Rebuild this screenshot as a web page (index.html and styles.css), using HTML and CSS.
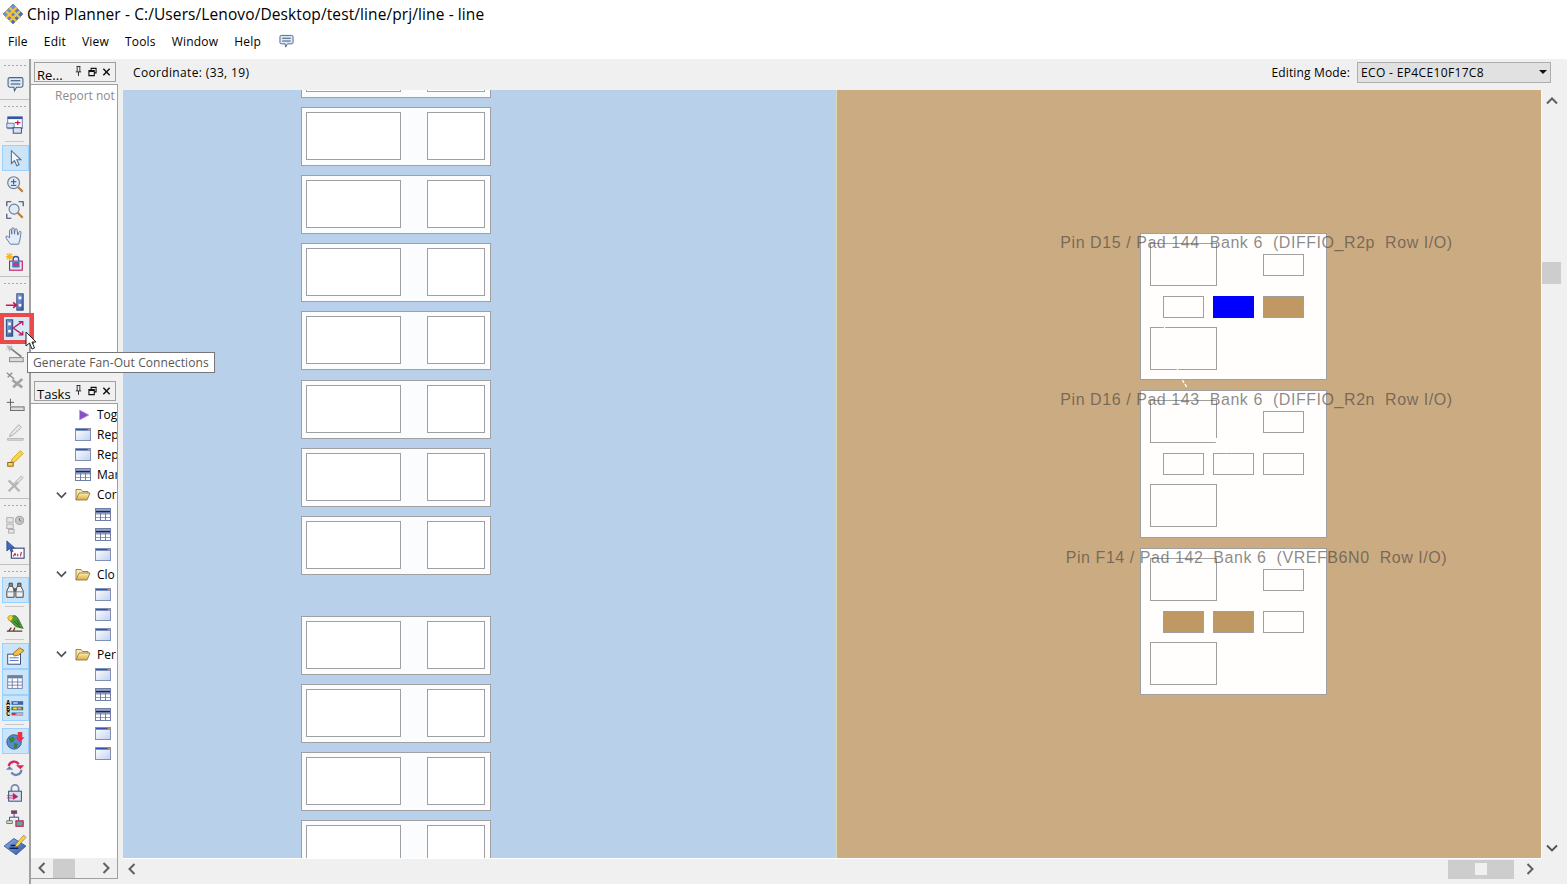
FILE: index.html
```html
<!DOCTYPE html>
<html lang="en">
<head>
  <meta charset="UTF-8">
  <title>Chip Planner</title>
  <link rel="stylesheet" href="styles.css">
</head>
<body>
  <svg class="defs" width="0" height="0">
    <defs>
      <linearGradient id="winfill" x1="0" y1="0" x2="1" y2="1"><stop offset="0" stop-color="#ffffff"/><stop offset="1" stop-color="#c4d2f0"/></linearGradient>
      <linearGradient id="bluefill" x1="0" y1="0" x2="1" y2="1"><stop offset="0" stop-color="#8fb0e6"/><stop offset="1" stop-color="#2c55a8"/></linearGradient>
      <linearGradient id="folderfill" x1="0" y1="0" x2="0" y2="1"><stop offset="0" stop-color="#fff0b8"/><stop offset="1" stop-color="#d9a93f"/></linearGradient>
      <symbol id="win" viewBox="0 0 16 13">
        <rect x=".5" y=".5" width="15" height="12" fill="url(#winfill)" stroke="#7f90b8"/>
        <rect x="1" y="1" width="14" height="1.6" fill="#2f55ad"/>
        <rect x="12.6" y="1" width="2.4" height="1.6" fill="#f08a1c"/>
      </symbol>
      <symbol id="table" viewBox="0 0 16 13">
        <rect x=".5" y=".5" width="15" height="12" fill="#fff" stroke="#6d7fa6"/>
        <rect x="1" y="1" width="14" height="1.4" fill="#8ea2c8"/>
        <rect x="1" y="2.6" width="14" height="2" fill="#14266b"/>
        <path d="M1 5h14v1.5H1zM1 9h14v1H1z" fill="#6d7fa6" opacity=".75"/>
        <path d="M5.5 5v7.5M10.5 5v7.5" stroke="#6d7fa6" fill="none"/>
      </symbol>
      <symbol id="folder" viewBox="0 0 16 13">
        <path d="M1 12V1.5h5l1.5 2H13V5" fill="#fbe9a8" stroke="#8f7a45" stroke-width=".9"/>
        <path d="M1 12l3-7h11l-3 7z" fill="url(#folderfill)" stroke="#8f7a45" stroke-width=".9"/>
      </symbol>
      <symbol id="chev-down" viewBox="0 0 12 8"><path d="M1 1.5l5 5 5-5" fill="none" stroke="#505050" stroke-width="1.8"/></symbol>
      <symbol id="chev-left" viewBox="0 0 8 12"><path d="M6.5 1L1.5 6l5 5" fill="none" stroke="#606060" stroke-width="2"/></symbol>
      <symbol id="chev-right" viewBox="0 0 8 12"><path d="M1.5 1l5 5-5 5" fill="none" stroke="#606060" stroke-width="2"/></symbol>
      <symbol id="chev-up" viewBox="0 0 12 8"><path d="M1 6.5l5-5 5 5" fill="none" stroke="#606060" stroke-width="2"/></symbol>
      <symbol id="msg" viewBox="0 0 16 16">
        <path d="M2.5 1.5h11a1.5 1.5 0 0 1 1.5 1.5v6a1.5 1.5 0 0 1-1.5 1.5H9l-2 3.5-.5-3.5h-4A1.5 1.5 0 0 1 1 9V3a1.5 1.5 0 0 1 1.5-1.5z" fill="#dbe8f7" stroke="#4b6680"/>
        <path d="M3.5 4.5h9M3.5 7.5h9" stroke="#34506c" fill="none"/>
      </symbol>
      <symbol id="pin" viewBox="0 0 10 12"><path d="M3 1h4M3.5 1v6M6.5 1v6M2 7h6M5 7v4.5" fill="none" stroke="#222" stroke-width="1"/></symbol>
      <symbol id="float" viewBox="0 0 10 10"><path d="M3.5 3V1h5.5v5H7M1 3.5h6v5.5H1zM1 4.5h6" fill="none" stroke="#111" stroke-width="1.2"/></symbol>
      <symbol id="close" viewBox="0 0 10 10"><path d="M1.5 1.5l7 7M8.5 1.5l-7 7" fill="none" stroke="#111" stroke-width="1.6"/></symbol>
    </defs>
  </svg>

  <div class="app">
    <header class="titlebar">
      <svg class="logo" viewBox="0 0 22 22">
        <path d="M11 1l10 10-10 10L1 11z" fill="url(#bluefill)" stroke="#56658a" stroke-width=".6"/>
        <path d="M7.500 4.500l10.500 10.500M4 8l10.500 10.500M14.500 4.500L4 15M18 8L7.500 18.500" stroke="#f2c33c" stroke-width="2.200" fill="none"/>
      </svg>
      <span class="title-text">Chip Planner - C:/Users/Lenovo/Desktop/test/line/prj/line - line</span>
    </header>

    <nav class="menubar">
      <span class="menu-item">File</span>
      <span class="menu-item">Edit</span>
      <span class="menu-item">View</span>
      <span class="menu-item">Tools</span>
      <span class="menu-item">Window</span>
      <span class="menu-item">Help</span>
      <svg class="menu-icon"><use href="#msg"/></svg>
    </nav>

    <div class="workspace">
      <aside class="toolbar">
        <div class="grip"></div>
        <div class="tool"><svg class="ico"><use href="#msg"/></svg></div>
        <div class="tool-sep big first"><span class="grip"></span></div>
        <div class="tool"><svg class="ico" viewBox="0 0 22 22"><rect x="3" y="2" width="16" height="13" fill="#fff" stroke="#5c74a8"/><rect x="3" y="2" width="16" height="2.500" fill="#2f55ad"/><rect x="2" y="9" width="8" height="5" fill="#d9e2f2" stroke="#5c74a8"/><rect x="9" y="14" width="9" height="6" fill="#d9e2f2" stroke="#30426e"/><path d="M11 8.500h6M14 6v5" stroke="#c2185b" stroke-width="1.400"/></svg></div>
        <div class="tool-sep"></div>
        <div class="tool on"><svg class="ico" viewBox="0 0 22 22"><path d="M7 3v14l3.5-3 2.5 5.5 2.500-1-2.500-5.500h4.500z" fill="#f4f7fb" stroke="#59708f" stroke-width="1.200"/></svg></div>
        <div class="tool"><svg class="ico" viewBox="0 0 22 22"><circle cx="9.500" cy="9.500" r="6.500" fill="#dfeaf7" stroke="#6b8199" stroke-width="1.300"/><path d="M6.500 8.500h6M9.500 5.500v6M6.500 12.500h6" stroke="#2c4f9c" stroke-width="1.100"/><path d="M14.500 14.500l5 5" stroke="#b5812f" stroke-width="2.400"/></svg></div>
        <div class="tool"><svg class="ico" viewBox="0 0 22 22"><path d="M2 7V2h5M15 2h5v5M2 15v5h5" fill="none" stroke="#30426e" stroke-width="1.200"/><circle cx="10" cy="10" r="5.500" fill="#dfeaf7" stroke="#6b8199" stroke-width="1.300"/><path d="M14 14l5.500 5.500" stroke="#b5812f" stroke-width="2.400"/></svg></div>
        <div class="tool"><svg class="ico" viewBox="0 0 22 22"><path d="M6 20c-2-3-5-6-5-8 0-1.500 2-1 4 1V5c0-1.500 2-1.500 2 0l.500 4V3c0-1.500 2.500-1.500 2.500 0l.500 6 .5-5c.2-1.500 2.500-1.300 2.300.2L14 10l1.500-3.500c.6-1.300 2.500-.6 2 .8C17 10 17 15 15.500 18l-.5 2z" fill="#e3ecf8" stroke="#5c6f92" stroke-width="1"/></svg></div>
        <div class="tool"><svg class="ico" viewBox="0 0 22 22"><path d="M5 1v8M1 5h8M2 2l6 6M8 2L2 8" stroke="#f5b718" stroke-width="1.400"/><rect x="5" y="10" width="14" height="10" fill="#dfe6f5" stroke="#c2185b" stroke-width="1.200"/><path d="M9 10V8a3 3 0 0 1 6 0v2" fill="none" stroke="#2f55ad" stroke-width="1.500"/><rect x="8" y="11" width="8" height="6" fill="#4d6fb8"/><path d="M9 14h6" stroke="#d6336c" stroke-width="1.400"/></svg></div>
        <div class="tool-sep big"><span class="grip"></span></div>
        <div class="tool"><svg class="ico" viewBox="0 0 22 22"><rect x="13" y="2" width="7" height="18" fill="url(#bluefill)" stroke="#30426e"/><rect x="15" y="5" width="3" height="3" fill="#fff"/><rect x="15" y="13" width="3" height="3" fill="#fff"/><path d="M1 14.500h11M9 11.500l3.500 3-3.500 3" fill="none" stroke="#c2185b" stroke-width="1.700"/></svg></div>
        <div class="tool hover"><svg class="ico" viewBox="0 0 22 22"><rect x="1.500" y="2" width="7" height="18" fill="url(#bluefill)" stroke="#30426e"/><rect x="3.500" y="5" width="3" height="3" fill="#fff"/><rect x="3.500" y="13" width="3" height="3" fill="#fff"/><path d="M9 11L19 4M9 11l10 7M15 4h4.500v4M15 18.500h4.500v-4" fill="none" stroke="#c2185b" stroke-width="1.500"/></svg></div>
        <div class="tool"><svg class="ico off" viewBox="0 0 22 22"><path d="M5 4l13 10" stroke="#666" stroke-width="1.800"/><path d="M2 2l6 1-3 5zM6 1l2 1M1 5l1 2" fill="#aaa" stroke="#aaa" stroke-width=".6"/><rect x="5" y="15" width="15" height="4.500" fill="#d8d8d8" stroke="#666"/></svg></div>
        <div class="tool"><svg class="ico off" viewBox="0 0 22 22"><path d="M2 3l8 7M3 8l5-5" stroke="#777" stroke-width="1.500"/><path d="M8 11l11 8M19 10L9 19" stroke="#909090" stroke-width="3"/></svg></div>
        <div class="tool"><svg class="ico" viewBox="0 0 22 22"><path d="M6 3v8M2 7h8" stroke="#555" stroke-width="1"/><rect x="6" y="12" width="15" height="4" fill="#ddd" stroke="#666"/></svg></div>
        <div class="tool"><svg class="ico off" viewBox="0 0 22 22"><path d="M6 13l9-10 3 3-10 9-3 1z" fill="#e5e5e5" stroke="#999"/><rect x="3" y="18" width="17" height="2" fill="#d0d0d0" stroke="#888" stroke-width=".6"/></svg></div>
        <div class="tool"><svg class="ico" viewBox="0 0 22 22"><path d="M8 12l9-9 3 3-9 9-5 1z" fill="#f7d84a" stroke="#d69a12"/><rect x="3" y="16" width="6" height="4" fill="#f7d84a" stroke="#8a5a12"/></svg></div>
        <div class="tool"><svg class="ico off" viewBox="0 0 22 22"><path d="M9 11l9-9 2 2-8 9z" fill="#dcdcdc" stroke="#aaa"/><path d="M4 7l12 12M4 19L14 9" stroke="#a8a8a8" stroke-width="2.600"/></svg></div>
        <div class="tool-sep big"><span class="grip"></span></div>
        <div class="tool"><svg class="ico off" viewBox="0 0 22 22"><rect x="2" y="4" width="7" height="5" fill="#e4e4e4" stroke="#999"/><rect x="2" y="11" width="7" height="5" fill="#e4e4e4" stroke="#999"/><rect x="4" y="17" width="6" height="4" fill="#e4e4e4" stroke="#999"/><circle cx="16" cy="7" r="4.500" fill="#bbb" stroke="#888"/><path d="M16 4.500V7l2 1" stroke="#555" fill="none"/></svg></div>
        <div class="tool"><svg class="ico" viewBox="0 0 22 22"><rect x="7" y="9" width="14" height="11" fill="#fff" stroke="#30426e" stroke-width="1.200"/><path d="M9 18l2-3 1 2M14 18v-3M17 18l1-5" stroke="#c2185b" stroke-width="1.200" fill="none"/><path d="M2 1v11l3-2.500 2 4 2-1-2-4h3.500z" fill="#4369c2" stroke="#1d3a80" stroke-width=".7"/></svg></div>
        <div class="tool-sep big"><span class="grip"></span></div>
        <div class="tool on"><svg class="ico" viewBox="0 0 22 22"><path d="M2 19v-7l2.500-5h4l1.500 5v7zM12 19v-7l1.500-5h4l2.500 5v7z" fill="#eef1f4" stroke="#3c3c3c"/><path d="M4.500 7V3.500h3.500V7M14 7V3.500h3.500V7" fill="#8c8c8c" stroke="#3c3c3c"/><rect x="9.500" y="9" width="3" height="4" fill="#5a5a5a"/><path d="M2.500 13h7M12.500 13h7" stroke="#777"/></svg></div>
        <div class="tool-sep"></div>
        <div class="tool"><svg class="ico" viewBox="0 0 22 22"><path d="M7 4c3-3 7 0 8 3l5 10-8-2-6-6z" fill="#4f9b3a" stroke="#2e5d22" stroke-width=".7"/><path d="M3 5c1-3 5-3 6 0L7 9 4 8z" fill="#f3d42c" stroke="#8d7a12" stroke-width=".6"/><path d="M2 20h17M4 20l3-4M9 20l2-4" stroke="#5d3a22" stroke-width="1.400" fill="none"/><path d="M10 9l5 5 2 2M13 8l3 5" stroke="#17603a" stroke-width="1.100" fill="none"/></svg></div>
        <div class="tool-sep"></div>
        <div class="tool on"><svg class="ico" viewBox="0 0 22 22"><rect x="3" y="9" width="14" height="11" fill="#fff" stroke="#30426e"/><path d="M5 13h10M5 16h10" stroke="#4369c2"/><path d="M9 8l7-6 5 3-6 5-5 1z" fill="#f2c04a" stroke="#7a5510" stroke-width=".8"/></svg></div>
        <div class="tool on"><svg class="ico" viewBox="0 0 22 22"><rect x="3" y="4" width="16" height="14" fill="#fff" stroke="#6d7fa6"/><rect x="3" y="4" width="16" height="3" fill="#6d7fa6"/><path d="M3 11h16M3 14.500h16M8 7v11M14 7v11" stroke="#6d7fa6"/></svg></div>
        <div class="tool on"><svg class="ico" viewBox="0 0 22 22"><text x="1.500" y="8" class="abc">A</text><text x="1.500" y="14" class="abc">B</text><text x="1.500" y="20" class="abc">C</text><rect x="7" y="3.500" width="13" height="4" fill="#3f63ad"/><rect x="9" y="4.500" width="5" height="2" fill="#a9c2ee"/><rect x="7" y="9.500" width="13" height="4" fill="#4a7c3a"/><rect x="9" y="10.500" width="4" height="2" fill="#f3e34c"/><rect x="14" y="10.500" width="4" height="2" fill="#d5a2c8"/><rect x="7" y="15.500" width="13" height="4" fill="#7fa0d6"/><rect x="7.500" y="16.500" width="4" height="2" fill="#d8232a"/><rect x="13" y="16.500" width="6" height="2" fill="#f0a0a0"/></svg></div>
        <div class="tool-sep"></div>
        <div class="tool on"><svg class="ico" viewBox="0 0 22 22"><circle cx="10" cy="12" r="8" fill="#5b86d3" stroke="#30426e" stroke-width=".8"/><path d="M4 8l5-2 2 3-2 3-3 1zM10 13l4 1-1 5-3 0z" fill="#2f8a35"/><path d="M14 1h5v6h2.500L16.500 12.500 11.500 7H14z" fill="#e8324e"/></svg></div>
        <div class="tool"><svg class="ico" viewBox="0 0 22 22"><path d="M4 10a6 6 0 0 1 11-2" fill="none" stroke="#d42a5b" stroke-width="2.600"/><path d="M12 9h9l-4 4.500z" fill="#d42a5b"/><path d="M18 14a6 6 0 0 1-11 3" fill="none" stroke="#6a88b5" stroke-width="2.600"/><path d="M1 14h8l-4-4z" fill="#6a88b5"/></svg></div>
        <div class="tool"><svg class="ico" viewBox="0 0 22 22"><path d="M7 9V6a4 4 0 0 1 8 0v3" fill="none" stroke="#7487ad" stroke-width="1.800"/><rect x="4" y="9" width="14" height="11" fill="#d6dff0" stroke="#30426e"/><path d="M2 14h8M2 16.500h6M9 11.500l5 3.500-5 3z" stroke="#c2185b" fill="#c2185b" stroke-width=".8"/></svg></div>
        <div class="tool"><svg class="ico" viewBox="0 0 22 22"><rect x="7" y="2" width="6" height="3" fill="#8d3a56" stroke="#30426e" stroke-width=".6"/><path d="M10 5v4M5 9h10M5 9v4M15 9v4" stroke="#30426e" fill="none"/><rect x="2" y="13" width="6" height="3" fill="#dfe58c" stroke="#30426e" stroke-width=".7"/><rect x="12" y="13" width="8" height="6" fill="#63a58d" stroke="#c2185b" stroke-width="1.200"/></svg></div>
        <div class="tool"><svg class="ico big-ico" viewBox="0 0 22 22"><path d="M1 12L10 5l11 7-9 8z" fill="url(#bluefill)" stroke="#2c4b8f" stroke-width=".7"/><path d="M7 11.500h7M6 14h8" stroke="#0e1f55" stroke-width="1.300"/><path d="M12 10l7-8 2 2-7 8-3 1z" fill="#f3d74a" stroke="#96701a" stroke-width=".6"/></svg></div>
      </aside>

      <div class="dock">
        <section class="panel report">
          <div class="panel-head">
            <span class="panel-title">Re...</span>
            <svg class="head-ico pin"><use href="#pin"/></svg>
            <svg class="head-ico"><use href="#float"/></svg>
            <svg class="head-ico"><use href="#close"/></svg>
          </div>
          <div class="panel-body">
            <div class="report-msg">Report not</div>
          </div>
        </section>
        <section class="panel tasks">
          <div class="panel-head">
            <span class="panel-title">Tasks</span>
            <svg class="head-ico pin"><use href="#pin"/></svg>
            <svg class="head-ico"><use href="#float"/></svg>
            <svg class="head-ico"><use href="#close"/></svg>
          </div>
          <div class="panel-body">
            <div class="tree">
              <div class="row top"><svg class="play" viewBox="0 0 12 12"><path d="M1.500 1l9.500 5-9.500 5z" fill="#8a4fc4" stroke="#b9a0d8" stroke-width=".6"/></svg><span class="label">Tog</span></div>
              <div class="row top"><svg class="leaf"><use href="#win"/></svg><span class="label">Rep</span></div>
              <div class="row top"><svg class="leaf"><use href="#win"/></svg><span class="label">Rep</span></div>
              <div class="row top"><svg class="leaf"><use href="#table"/></svg><span class="label">Mar</span></div>
              <div class="row top"><svg class="chev"><use href="#chev-down"/></svg><svg class="leaf"><use href="#folder"/></svg><span class="label">Cor</span></div>
              <div class="row sub"><svg class="leaf"><use href="#table"/></svg></div>
              <div class="row sub"><svg class="leaf"><use href="#table"/></svg></div>
              <div class="row sub"><svg class="leaf"><use href="#win"/></svg></div>
              <div class="row top"><svg class="chev"><use href="#chev-down"/></svg><svg class="leaf"><use href="#folder"/></svg><span class="label">Clo</span></div>
              <div class="row sub"><svg class="leaf"><use href="#win"/></svg></div>
              <div class="row sub"><svg class="leaf"><use href="#win"/></svg></div>
              <div class="row sub"><svg class="leaf"><use href="#win"/></svg></div>
              <div class="row top"><svg class="chev"><use href="#chev-down"/></svg><svg class="leaf"><use href="#folder"/></svg><span class="label">Per</span></div>
              <div class="row sub"><svg class="leaf"><use href="#win"/></svg></div>
              <div class="row sub"><svg class="leaf"><use href="#table"/></svg></div>
              <div class="row sub"><svg class="leaf"><use href="#table"/></svg></div>
              <div class="row sub"><svg class="leaf"><use href="#win"/></svg></div>
              <div class="row sub"><svg class="leaf"><use href="#win"/></svg></div>
            </div>
            <div class="hscroll small">
              <svg class="arrow-h"><use href="#chev-left"/></svg>
              <span class="thumb"></span>
              <svg class="arrow-h push"><use href="#chev-right"/></svg>
            </div>
          </div>
        </section>
      </div>

      <main class="main">
        <div class="infobar">
          <span class="coord">Coordinate: (33, 19)</span>
          <span class="mode-label">Editing Mode:</span>
          <div class="combo">ECO - EP4CE10F17C8<span class="caret"></span></div>
        </div>
        <div class="view-row">
          <div class="canvas">
            <div class="blue">
              <div class="cell"><span class="cbox wide"></span><span class="cbox"></span></div>
              <div class="cell"><span class="cbox wide"></span><span class="cbox"></span></div>
              <div class="cell"><span class="cbox wide"></span><span class="cbox"></span></div>
              <div class="cell"><span class="cbox wide"></span><span class="cbox"></span></div>
              <div class="cell"><span class="cbox wide"></span><span class="cbox"></span></div>
              <div class="cell"><span class="cbox wide"></span><span class="cbox"></span></div>
              <div class="cell"><span class="cbox wide"></span><span class="cbox"></span></div>
              <div class="cell"><span class="cbox wide"></span><span class="cbox"></span></div>
              <div class="cell group"><span class="cbox wide"></span><span class="cbox"></span></div>
              <div class="cell"><span class="cbox wide"></span><span class="cbox"></span></div>
              <div class="cell"><span class="cbox wide"></span><span class="cbox"></span></div>
              <div class="cell"><span class="cbox wide"></span><span class="cbox"></span></div>
            </div>
            <div class="tan">
              <div class="pad">
                <span class="pin-label">Pin D15 / Pad 144  Bank 6  (DIFFIO_R2p  Row I/O)</span>
                <div class="pad-row"><span class="box big"></span><span class="box small corner"></span></div>
                <div class="pad-row mid"><span class="box small"></span><span class="box small blue-fill"></span><span class="box small tan-fill"></span></div>
                <div class="pad-row last"><span class="box big"></span></div>
              </div>
              <div class="pad">
                <span class="pin-label">Pin D16 / Pad 143  Bank 6  (DIFFIO_R2n  Row I/O)</span>
                <div class="pad-row"><span class="box big"></span><span class="box small corner"></span></div>
                <div class="pad-row mid"><span class="box small"></span><span class="box small"></span><span class="box small"></span></div>
                <div class="pad-row last"><span class="box big"></span></div>
              </div>
              <div class="pad">
                <span class="pin-label">Pin F14 / Pad 142  Bank 6  (VREFB6N0  Row I/O)</span>
                <div class="pad-row"><span class="box big"></span><span class="box small corner"></span></div>
                <div class="pad-row mid"><span class="box small tan-fill"></span><span class="box small tan-fill"></span><span class="box small"></span></div>
                <div class="pad-row last"><span class="box big"></span></div>
              </div>
              <!-- routing wires, white on top of the pads -->
              <svg class="wires" viewBox="0 0 704 769">
                <path d="M327.500 236.500v2M340.500 279v2M345.500 290l1.500 3M348 294l1.500 3M379.500 348v5M389 362.500h1" stroke="#fff" stroke-width="1.400" fill="none"/>
              </svg>
            </div>
          </div>
          <div class="vscroll">
            <svg class="arrow-v"><use href="#chev-up"/></svg>
            <span class="vthumb"></span>
            <svg class="arrow-v bottom"><use href="#chev-down"/></svg>
          </div>
        </div>
        <div class="hscroll wide">
          <svg class="arrow-h"><use href="#chev-left"/></svg>
          <span class="hthumb push"><span class="grip-box"></span></span>
          <svg class="arrow-h end"><use href="#chev-right"/></svg>
        </div>
      </main>
    </div>

    <div class="hot-frame"></div>
    <svg class="cursor" viewBox="0 0 12 20"><path d="M1 1v14l3.500-3 2.500 6 2.500-1-2.500-6H11z" fill="#fff" stroke="#222" stroke-width="1"/></svg>
    <div class="tooltip">Generate Fan-Out Connections</div>
  </div>
</body>
</html>
```

FILE: styles.css
```css
* {
  box-sizing: border-box;
}
html, body {
  margin: 0;
  height: 100%;
  overflow: hidden;
}
body {
  font-family: "Open Sans", "Noto Sans", Arial, sans-serif;
  font-size: 12px;
  color: #000;
  background-color: #f0f0f0;
}
.defs {
  position: absolute;
}
.app {
  position: relative;
  display: flex;
  flex-direction: column;
  width: 1567px;
  height: 884px;
}

/* title and menu */
.titlebar {
  display: flex;
  align-items: center;
  height: 30px;
  padding: 0 0 2px 2px;
  background-color: #fff;
}
.logo {
  flex: none;
  width: 22px;
  height: 22px;
  margin-right: 3px;
}
.title-text {
  font-size: 15.500px;
  letter-spacing: 0.1px;
}
.menubar {
  display: flex;
  align-items: center;
  height: 29px;
  padding: 0 0 7px 8px;
  background-color: #fff;
}
.menu-item {
  margin-right: 16px;
  letter-spacing: 0.2px;
}
.menu-icon {
  width: 15px;
  height: 15px;
  margin-left: 2px;
}

/* left toolbar */
.workspace {
  display: flex;
  flex: 1;
  min-height: 0;
}
.toolbar {
  display: flex;
  flex-direction: column;
  flex: none;
  width: 31px;
  padding-top: 3px;
  border-right: 2px solid #a0a0a0;
}
.grip {
  display: block;
  flex: none;
  height: 6px;
  margin: 0 3px 3px;
  background-image: radial-gradient(circle, #a8a8a8 1px, transparent 1px);
  background-size: 4px 3px;
  background-repeat: repeat-x;
  background-position: 0 2px;
}
.tool {
  display: flex;
  flex: none;
  align-items: center;
  justify-content: center;
  width: 27px;
  height: 26px;
  margin-left: 2px;
  padding-right: 1px;
  border: 1px solid transparent;
}
.tool.on {
  background-color: #cce4f7;
  border-color: #99d1ff;
}
.tool.hover {
  background-color: #d5e8f5;
}
.ico {
  width: 20px;
  height: 20px;
}
.ico:not([viewBox]) {
  width: 17px;
  height: 17px;
}
.big-ico {
  width: 24px;
  height: 24px;
}
.ico.off {
  opacity: 0.8;
}
.abc {
  font-family: "Liberation Mono", monospace;
  font-size: 7px;
  font-weight: 700;
}
.tool-sep {
  flex: none;
  height: 7px;
  margin: 0 5px;
  background: linear-gradient(#c8c8c8, #c8c8c8) no-repeat 0 3px / 100% 1px;
}
.tool-sep.big {
  height: 14px;
  margin: 0;
  padding-top: 5px;
  background: linear-gradient(#c0c0c0, #c0c0c0) no-repeat 0 1px / 100% 1px;
}
.tool-sep.big.first {
  height: 15px;
  padding-top: 6px;
  background-position: 0 2px;
}

/* dock panels */
.dock {
  display: flex;
  flex-direction: column;
  flex: none;
  width: 92px;
  padding-right: 5px;
}
.panel {
  display: flex;
  flex-direction: column;
}
.panel.report {
  height: 322px;
  padding: 3px 0 8px;
}
.panel.tasks {
  height: 498px;
}
.panel-head {
  display: flex;
  flex: none;
  align-items: center;
  height: 20px;
  margin: 0 2px 2px 3px;
  padding-left: 2px;
  border: 1px solid #a0a0a0;
}
.panel-title {
  flex: 1;
  padding-top: 5px;
  font-size: 13px;
}
.head-ico {
  width: 9px;
  height: 10px;
  margin-right: 5px;
}
.head-ico:last-child {
  margin-right: 4px;
}
.head-ico.pin {
  height: 12px;
  margin-right: 5px;
  margin-top: -3px;
}
.panel-body {
  display: flex;
  flex: 1;
  flex-direction: column;
  min-height: 0;
  overflow: hidden;
  background-color: #fff;
  border: 1px solid #a0a0a0;
  border-left: 0;
}
.report-msg {
  padding: 2px 0 0 24px;
  color: #8c8c8c;
  white-space: nowrap;
}
.tree {
  flex: 1;
  padding-top: 1px;
  overflow: hidden;
}
.row {
  display: flex;
  align-items: center;
  height: 19.940px;
  white-space: nowrap;
}
.row svg {
  flex: none;
}
.row.top {
  padding-left: 25px;
}
.row.top .leaf {
  margin-left: 19px;
  margin-right: 6px;
}
.row.top .chev + .leaf {
  margin-left: 8px;
}
.row.sub {
  padding-left: 64px;
}
.chev {
  width: 11px;
  height: 8px;
}
.leaf {
  width: 16px;
  height: 13px;
}
.play {
  width: 12px;
  height: 12px;
}
.row.top .play {
  margin-left: 22px;
  margin-right: 7px;
}

/* scroll bars */
.hscroll {
  display: flex;
  flex: none;
  align-items: center;
  height: 25px;
  padding: 0 0 5px 5px;
}
.hscroll.small {
  height: 20px;
  padding: 0 7px;
  background-color: #f0f0f0;
}
.arrow-h {
  flex: none;
  width: 8px;
  height: 12px;
}
.push {
  margin-left: auto;
}
.thumb {
  width: 22px;
  height: 19px;
  margin-left: 7px;
  background-color: #cdcdcd;
}
.hthumb {
  display: flex;
  align-items: center;
  justify-content: center;
  width: 66px;
  height: 19px;
  background-color: #cdcdcd;
}
.grip-box {
  width: 12px;
  height: 12px;
  background-color: #f0f0f0;
}
.arrow-h.end {
  margin: 0 33px 0 12px;
}

/* main view */
.main {
  display: flex;
  flex: 1;
  flex-direction: column;
  min-width: 0;
}
.infobar {
  display: flex;
  flex: none;
  align-items: center;
  height: 31px;
  padding: 0 16px 4px 10px;
}
.coord {
  letter-spacing: 0.35px;
}
.mode-label {
  margin-left: auto;
  margin-right: 7px;
  letter-spacing: 0.15px;
}
.combo {
  position: relative;
  width: 194px;
  height: 21px;
  padding: 1px 0 0 3px;
  letter-spacing: 0.35px;
  background-color: #e1e1e1;
  border: 1px solid #adadad;
}
.caret {
  position: absolute;
  top: 7px;
  right: 3px;
  width: 0;
  height: 0;
  border-left: 4px solid transparent;
  border-right: 4px solid transparent;
  border-top: 4px solid #111;
}
.view-row {
  display: flex;
  flex: 1;
  min-height: 0;
}
.canvas {
  display: flex;
  flex: none;
  width: 1419px;
  overflow: hidden;
  border-right: 1px solid #fff8ea;
  border-bottom: 1px solid #fff;
}
.blue {
  display: flex;
  flex: none;
  flex-direction: column;
  gap: 9.17px;
  width: 713px;
  padding: 0 0 0 178px;
  margin-top: -51.17px;
  background-color: #b9d0ea;
}
.cell {
  display: flex;
  flex: none;
  justify-content: space-between;
  width: 190px;
  height: 59px;
  padding: 4px 5px 5px 4px;
  background-color: #fbfcfe;
  border: 1px solid #a0a0a0;
}
.cell.group {
  margin-top: 31.830px;
}
.cbox {
  width: 58px;
  height: 48px;
  background-color: #fff;
  border: 1px solid #a0a0a0;
}
.cbox.wide {
  width: 95px;
}
.tan {
  position: relative;
  display: flex;
  flex: 1;
  flex-direction: column;
  gap: 10px;
  padding: 142.800px 0 0 303px;
  background-color: #cbab81;
  border-left: 1px solid #dcdcb4;
}
.pad {
  position: relative;
  flex: none;
  width: 187px;
  height: 147.500px;
  padding: 9px 0 0 9px;
  background-color: #fffefc;
  border: 1px solid #a0a0a0;
}
.pin-label {
  position: absolute;
  top: 0;
  left: calc(50% + 23px);
  transform: translateX(-50%);
  font-family: "Liberation Sans", Arial, sans-serif;
  font-size: 16px;
  line-height: 18px;
  letter-spacing: 0.56px;
  color: rgba(60, 60, 60, 0.6);
  white-space: pre;
}
.pad-row {
  display: flex;
}
.pad-row.mid {
  gap: 9px;
  margin-top: 10px;
  padding-left: 13px;
}
.pad-row.last {
  margin-top: 9px;
}
.box {
  background-color: #fffefc;
  border: 1px solid #a0a0a0;
}
.box.big {
  width: 67px;
  height: 43px;
}
.box.small {
  width: 41px;
  height: 22px;
}
.box.corner {
  margin: 11px 0 0 46px;
}
.box.blue-fill {
  background-color: #0000ff;
  border-color: #0000ff;
}
.box.tan-fill {
  background-color: #bf9863;
}
.wires {
  position: absolute;
  top: 0;
  left: 0;
  width: 704px;
  height: 769px;
}
.vscroll {
  display: flex;
  flex: 1;
  flex-direction: column;
  align-items: center;
  padding: 7px 6px 7px 0;
}
.arrow-v {
  flex: none;
  width: 12px;
  height: 8px;
}
.arrow-v.bottom {
  margin-top: auto;
}
.vthumb {
  flex: none;
  width: 19px;
  height: 22px;
  margin-top: 157px;
  background-color: #cdcdcd;
}

/* things lying over the rest */
.hot-frame {
  position: absolute;
  top: 313px;
  left: 0;
  width: 34px;
  height: 31px;
  border: 4px solid #ea4a4a;
}
.cursor {
  position: absolute;
  top: 331px;
  left: 25px;
  width: 12px;
  height: 20px;
}
.tooltip {
  position: absolute;
  top: 352px;
  left: 27px;
  width: 188px;
  height: 21px;
  padding: 1px 0 0 5px;
  letter-spacing: 0.1px;
  color: #575757;
  white-space: nowrap;
  background-color: #fff;
  border: 1px solid #767676;
}
```
